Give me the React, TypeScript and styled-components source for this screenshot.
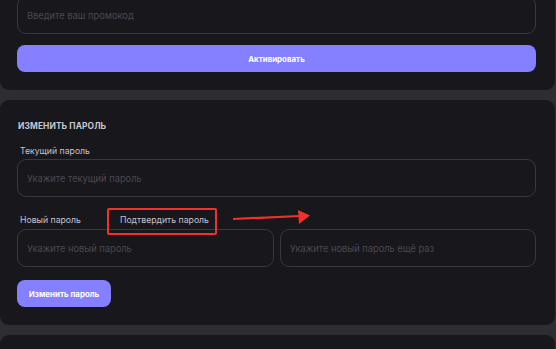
import React from "react";
import styled, { createGlobalStyle } from "styled-components";

const Global = createGlobalStyle`
  html, body { margin: 0; padding: 0; background: #2e2d33; overflow: hidden; }
  body { font-family: Inter, "Noto Sans", sans-serif; }
  * { box-sizing: border-box; }
`;

const Page = styled.div`
  display: flex;
  flex-direction: column;
  gap: 10px;
  width: 555px;
  margin-top: -24px;
`;

const Card = styled.section`
  background: #18171b;
  border-radius: 9px;
  padding: 20px 19px 18px 17px;
  display: flex;
  flex-direction: column;
  position: relative;
`;

const Title = styled.h3`
  margin: 0 0 13px 1px;
  font-size: 8.4px;
  line-height: 12px;
  font-weight: 700;
  letter-spacing: 0.1px;
  text-transform: uppercase;
  color: #c9c8d3;
`;

const Label = styled.label`
  display: block;
  padding-left: 3px;
  font-size: 8.7px;
  line-height: 12px;
  color: #c5c4cf;
`;

const Field = styled.div`
  display: flex;
  flex-direction: column;
  gap: 2px;
`;

const Input = styled.input`
  width: 100%;
  height: 38px;
  background: transparent;
  border: 1px solid #393842;
  border-radius: 9px;
  padding: 0 9px;
  font-family: Inter, "Noto Sans", sans-serif;
  font-size: 9.3px;
  color: #e0e0e8;
  outline: none;
  &::placeholder { color: #4a4951; }
`;

const LabelRow = styled.div`
  display: flex;
  gap: 36px;
  margin: 17px 0 3px;
  position: relative;
`;

const InputGrid = styled.div`
  display: grid;
  grid-template-columns: 257px 256px;
  gap: 6px;
`;

const Button = styled.button<{ $full?: boolean }>`
  height: 27px;
  width: ${(p) => (p.$full ? "100%" : "94px")};
  align-self: flex-start;
  padding: 0;
  border: none;
  border-radius: 8px;
  background: #8480ff;
  color: #ffffff;
  font-family: Inter, "Noto Sans", sans-serif;
  font-weight: 700;
  font-size: 7.9px;
  cursor: pointer;
`;

const PromoStack = styled.div`
  display: flex;
  flex-direction: column;
  gap: 11px;
`;

const Highlight = styled.div`
  position: absolute;
  left: 90px;
  top: -6px;
  width: 110px;
  height: 27px;
  border: 2px solid #f0322b;
  border-radius: 2px;
  pointer-events: none;
`;

const Arrow = styled.svg`
  position: absolute;
  left: 216px;
  top: -10px;
  width: 82px;
  height: 24px;
  pointer-events: none;
`;

const ChangeButtonWrap = styled.div`
  margin-top: 13px;
`;

const Spacer = styled.div`
  height: 20px;
`;

export default function App() {
  return (
    <>
      <Global />
      <Page>
        <Card>
          <PromoStack>
            <Input placeholder="Введите ваш промокод" />
            <Button $full>Активировать</Button>
          </PromoStack>
        </Card>
        <Card>
          <Title>Изменить пароль</Title>
          <Field>
            <Label>Текущий пароль</Label>
            <Input type="password" placeholder="Укажите текущий пароль" />
          </Field>
          <LabelRow>
            <Label>Новый пароль</Label>
            <Label>Подтвердить пароль</Label>
            <Highlight />
            <Arrow viewBox="0 0 82 24">
              <line x1="0" y1="15" x2="67" y2="12" stroke="#f0322b" strokeWidth="2.2" />
              <polygon points="65,6 77,11.5 66,20" fill="#f0322b" />
            </Arrow>
          </LabelRow>
          <InputGrid>
            <Input type="password" placeholder="Укажите новый пароль" />
            <Input type="password" placeholder="Укажите новый пароль ещё раз" />
          </InputGrid>
          <ChangeButtonWrap>
            <Button>Изменить пароль</Button>
          </ChangeButtonWrap>
        </Card>
        <Card>
          <Spacer />
        </Card>
      </Page>
    </>
  );
}
